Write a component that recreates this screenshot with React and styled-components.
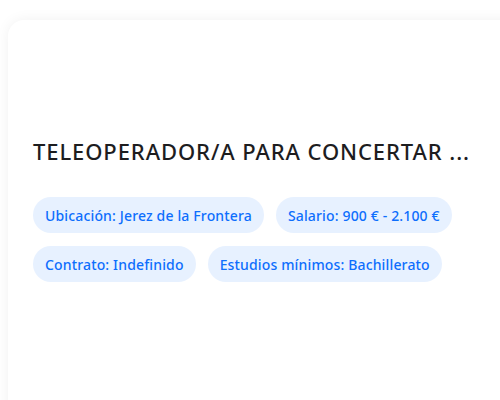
import React from "react";
import styled, { createGlobalStyle } from "styled-components";

const GlobalStyle = createGlobalStyle`
    html, body {
        margin: 0;
        padding: 0;
        background: #ffffff;
        overflow: hidden;
        font-family: "Noto Sans", "Open Sans", sans-serif;
    }
`;

const tags = [
    ["Ubicación", "Jerez de la Frontera"],
    ["Salario", "900 € - 2.100 €"],
    ["Contrato", "Indefinido"],
    ["Estudios mínimos", "Bachillerato"],
];

const App = () => {
    return (
        <>
            <GlobalStyle />
            <Page>
                <Card>
                    <Title>TELEOPERADOR/A PARA CONCERTAR ...</Title>
                    <Tags>
                        {tags.map(([label, value]) => (
                            <Tag key={label}>
                                {label}: {value}
                            </Tag>
                        ))}
                    </Tags>
                </Card>
            </Page>
        </>
    );
};

export default App;

const Page = styled.div`
    width: 500px;
    height: 400px;
    padding: 20px 0 0 8px;
    box-sizing: border-box;
    overflow: hidden;
`;

const Card = styled.div`
    width: 520px;
    height: 420px;
    box-sizing: border-box;
    background: #ffffff;
    border-radius: 16px;
    box-shadow: 0 0 14px rgba(0, 0, 0, 0.06);
    padding: 118px 30px 0 25px;
    display: flex;
    flex-direction: column;
    gap: 33px;
`;

const Title = styled.h2`
    margin: 0;
    font-size: 22px;
    line-height: 1.2;
    font-weight: 500;
    letter-spacing: 0.9px;
    color: #1d1d1f;
    white-space: nowrap;
`;

const Tags = styled.div`
    display: flex;
    flex-wrap: wrap;
    gap: 13px 12px;
    width: 440px;
`;

const Tag = styled.span`
    display: inline-flex;
    align-items: center;
    height: 36px;
    padding: 0 12px;
    border-radius: 18px;
    background: #e7f1ff;
    color: #0d6efd;
    font-size: 14px;
    font-weight: 500;
    letter-spacing: 0.15px;
    white-space: nowrap;
`;
